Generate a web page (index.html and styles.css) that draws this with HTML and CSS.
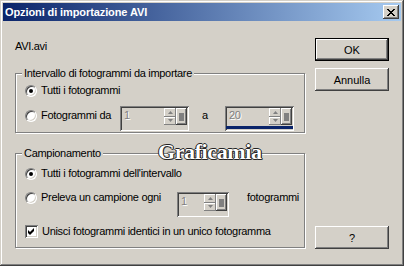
FILE: index.html
```html
<!DOCTYPE html>
<html>
<head>
    <title>Opzioni di importazione AVI</title>
    <link rel="stylesheet" href="styles.css">
</head>
<body>
    <div class="window">
        <div class="titlebar">
            <span class="title">Opzioni di importazione AVI</span>
            <span class="close">
                <svg width="8" height="7" viewBox="0 0 8 7"><path d="M0 0h2v1H0z M6 0h2v1H6z M1 1h2v1H1z M5 1h2v1H5z M2 2h4v1H2z M3 3h2v1H3z M2 4h4v1H2z M1 5h2v1H1z M5 5h2v1H5z M0 6h2v1H0z M6 6h2v1H6z" fill="#000"/></svg>
            </span>
        </div>

        <div class="content">
            <div class="left">
                <div class="filename">AVI.avi</div>

                <fieldset class="group group-range">
                    <legend>Intervallo di fotogrammi da importare</legend>
                    <div class="row row-first">
                        <span class="radio checked"></span>
                        <span>Tutti i fotogrammi</span>
                    </div>
                    <div class="row row-spin">
                        <span class="opt opt-range"><span class="radio"></span>Fotogrammi da</span>
                        <div class="spin spin-range">
                            <div class="spin-main">
                                <span class="spin-value">1</span>
                                <span class="spin-arrows">
                                    <span class="arrow"><svg width="5" height="3" viewBox="0 0 5 3"><path d="M0 3L2.5 0L5 3z" fill="#808080"/></svg></span>
                                    <span class="arrow"><svg width="5" height="3" viewBox="0 0 5 3"><path d="M0 0L2.5 3L5 0z" fill="#808080"/></svg></span>
                                </span>
                                <span class="spin-knob"><span class="knob"></span></span>
                            </div>
                            <div class="spin-bar"></div>
                        </div>
                        <span class="to">a</span>
                        <div class="spin spin-range spin-focus">
                            <div class="spin-main">
                                <span class="spin-value">20</span>
                                <span class="spin-arrows">
                                    <span class="arrow"><svg width="5" height="3" viewBox="0 0 5 3"><path d="M0 3L2.5 0L5 3z" fill="#808080"/></svg></span>
                                    <span class="arrow"><svg width="5" height="3" viewBox="0 0 5 3"><path d="M0 0L2.5 3L5 0z" fill="#808080"/></svg></span>
                                </span>
                                <span class="spin-knob"><span class="knob"></span></span>
                            </div>
                            <div class="spin-bar"></div>
                        </div>
                    </div>
                </fieldset>

                <fieldset class="group group-sample">
                    <legend>Campionamento</legend>
                    <div class="row row-first">
                        <span class="radio checked"></span>
                        <span>Tutti i fotogrammi dell'intervallo</span>
                    </div>
                    <div class="row row-spin">
                        <span class="opt opt-sample"><span class="radio"></span>Preleva un campione ogni</span>
                        <div class="spin spin-sample">
                            <div class="spin-main">
                                <span class="spin-value">1</span>
                                <span class="spin-arrows">
                                    <span class="arrow"><svg width="5" height="3" viewBox="0 0 5 3"><path d="M0 3L2.5 0L5 3z" fill="#808080"/></svg></span>
                                    <span class="arrow"><svg width="5" height="3" viewBox="0 0 5 3"><path d="M0 0L2.5 3L5 0z" fill="#808080"/></svg></span>
                                </span>
                                <span class="spin-knob"><span class="knob"></span></span>
                            </div>
                            <div class="spin-bar"></div>
                        </div>
                        <span class="unit">fotogrammi</span>
                    </div>
                    <div class="row row-check">
                        <span class="check">
                            <svg width="7" height="7" viewBox="0 0 7 7"><path d="M0 2L2 4L6 0V3L2 7L0 5z" fill="#000"/></svg>
                        </span>
                        <span>Unisci fotogrammi identici in un unico fotogramma</span>
                    </div>
                </fieldset>
            </div>

            <div class="right">
                <button class="btn btn-default">OK</button>
                <button class="btn">Annulla</button>
                <button class="btn btn-help">?</button>
            </div>
        </div>

        <div class="watermark">Graficamia</div>
    </div>
</body>
</html>
```

FILE: styles.css
```css
* {
    box-sizing: border-box;
}

body {
    margin: 0;
    background-color: #d4d0c8;
    font-family: "Liberation Sans", Arial, sans-serif;
    font-size: 11px;
    letter-spacing: -0.3px;
    color: #000;
}

.window {
    position: relative;
    width: 404px;
    height: 266px;
    padding: 3px;
    display: flex;
    flex-direction: column;
    background-color: #d4d0c8;
    box-shadow: inset -1px -1px #404040, inset 1px 1px #d4d0c8,
                inset -2px -2px #808080, inset 2px 2px #fff;
}

.titlebar {
    height: 18px;
    display: flex;
    align-items: center;
    justify-content: space-between;
    padding: 0 2px 0 2px;
    background: linear-gradient(to right, #0a246a, #a6caf0);
}

.title {
    color: #fff;
    font-weight: bold;
    font-size: 11px;
    letter-spacing: -0.1px;
}

.close {
    width: 16px;
    height: 14px;
    display: flex;
    align-items: center;
    justify-content: center;
    background-color: #d4d0c8;
    box-shadow: inset -1px -1px #404040, inset 1px 1px #fff,
                inset -2px -2px #808080, inset 2px 2px #d4d0c8;
}

.content {
    flex: 1;
    display: flex;
    gap: 10px;
    padding: 0 12px 14px 12px;
}

.left {
    width: 290px;
    display: flex;
    flex-direction: column;
    padding-top: 19px;
}

.filename {
    line-height: 13px;
}

.group {
    margin: 0;
    padding: 0 0 0 9px;
    min-width: 0;
    border: 1px solid #808080;
    box-shadow: inset 1px 1px #fff, 1px 1px #fff;
}

.group legend {
    margin-left: -3px;
    padding: 0 2px;
    line-height: 13px;
    background-color: #d4d0c8;
}

.group-range {
    margin-top: 14px;
    padding-bottom: 1px;
}

.group-sample {
    margin-top: 14px;
    padding-bottom: 8px;
}

.row {
    display: flex;
    align-items: center;
    line-height: 15px;
    white-space: nowrap;
}

.row > * {
    flex: none;
}

.row-first {
    height: 15px;
    margin-top: 3px;
}

.group-sample .row-first {
    margin-top: 6px;
}

.row-spin {
    align-items: flex-start;
    margin-top: 8px;
}

.group-sample .row-spin {
    margin-top: 9px;
}

.row-check {
    height: 15px;
    margin-top: 7px;
}

.opt {
    display: flex;
    align-items: center;
    margin-top: 2px;
}

.opt-range {
    width: 95px;
}

.opt-sample {
    width: 152px;
    margin-top: 0;
}

.radio {
    position: relative;
    flex: none;
    width: 12px;
    height: 12px;
    margin-right: 4px;
    border-radius: 50%;
    background-color: #fff;
    border: 1px solid;
    border-color: #808080 #fff #fff #808080;
    box-shadow: inset 1px 1px #404040, inset -1px -1px #d4d0c8;
}

.radio.checked::after {
    content: "";
    position: absolute;
    left: 3px;
    top: 3px;
    width: 4px;
    height: 4px;
    border-radius: 50%;
    background-color: #000;
}

.check {
    flex: none;
    width: 13px;
    height: 13px;
    margin-right: 4px;
    display: flex;
    align-items: center;
    justify-content: center;
    background-color: #fff;
    box-shadow: inset 1px 1px #808080, inset -1px -1px #fff,
                inset 2px 2px #404040, inset -2px -2px #d4d0c8;
}

.spin {
    height: 25px;
    padding: 2px;
    display: flex;
    flex-direction: column;
    box-shadow: inset 1px 1px #808080, inset -1px -1px #fff,
                inset 2px 2px #404040, inset -2px -2px #d4d0c8;
}

.spin-range {
    width: 69px;
}

.spin-sample {
    width: 52px;
    margin-top: 2px;
}

.spin-main {
    flex: 1;
    display: flex;
}

.spin-value {
    flex: 1;
    padding-left: 2px;
    color: #808080;
    text-shadow: 1px 1px #fff;
}

.spin-arrows {
    width: 12px;
    display: flex;
    flex-direction: column;
}

.arrow {
    flex: 1;
    display: flex;
    align-items: center;
    justify-content: center;
    box-shadow: inset -1px -1px #808080, inset 1px 1px #fff;
}

.spin-knob {
    width: 11px;
    display: flex;
    align-items: center;
    justify-content: center;
    box-shadow: inset -1px -1px #404040, inset 1px 1px #fff,
                inset -2px -2px #808080;
}

.knob {
    width: 5px;
    height: 8px;
    background-color: #808080;
}

.spin-bar {
    height: 3px;
    margin: 1px -1px 0 -1px;
}

.spin-focus .spin-bar {
    background-color: #0a246a;
}

.to {
    width: 36px;
    padding-left: 13px;
    margin-top: 2px;
}

.unit {
    margin-left: 18px;
}

.right {
    width: 74px;
    display: flex;
    flex-direction: column;
    padding-top: 17px;
}

.btn {
    height: 23px;
    margin: 0 0 7px 0;
    padding: 0;
    font-family: "Liberation Sans", Arial, sans-serif;
    font-size: 11px;
    color: #000;
    background-color: #d4d0c8;
    border: none;
    box-shadow: inset -1px -1px #404040, inset 1px 1px #fff,
                inset -2px -2px #808080, inset 2px 2px #d4d0c8;
}

.btn-default {
    border: 1px solid #000;
}

.btn-help {
    margin: auto 0 0 0;
}

.watermark {
    position: absolute;
    left: 158px;
    top: 139px;
    font-family: "Liberation Serif", "Times New Roman", serif;
    font-weight: bold;
    font-size: 22px;
    letter-spacing: -0.4px;
    color: #fff;
    text-shadow: -1px 0 #222, 1px 0 #222, 0 -1px #222, 0 1px #222, 1px 1px #555;
}
```
